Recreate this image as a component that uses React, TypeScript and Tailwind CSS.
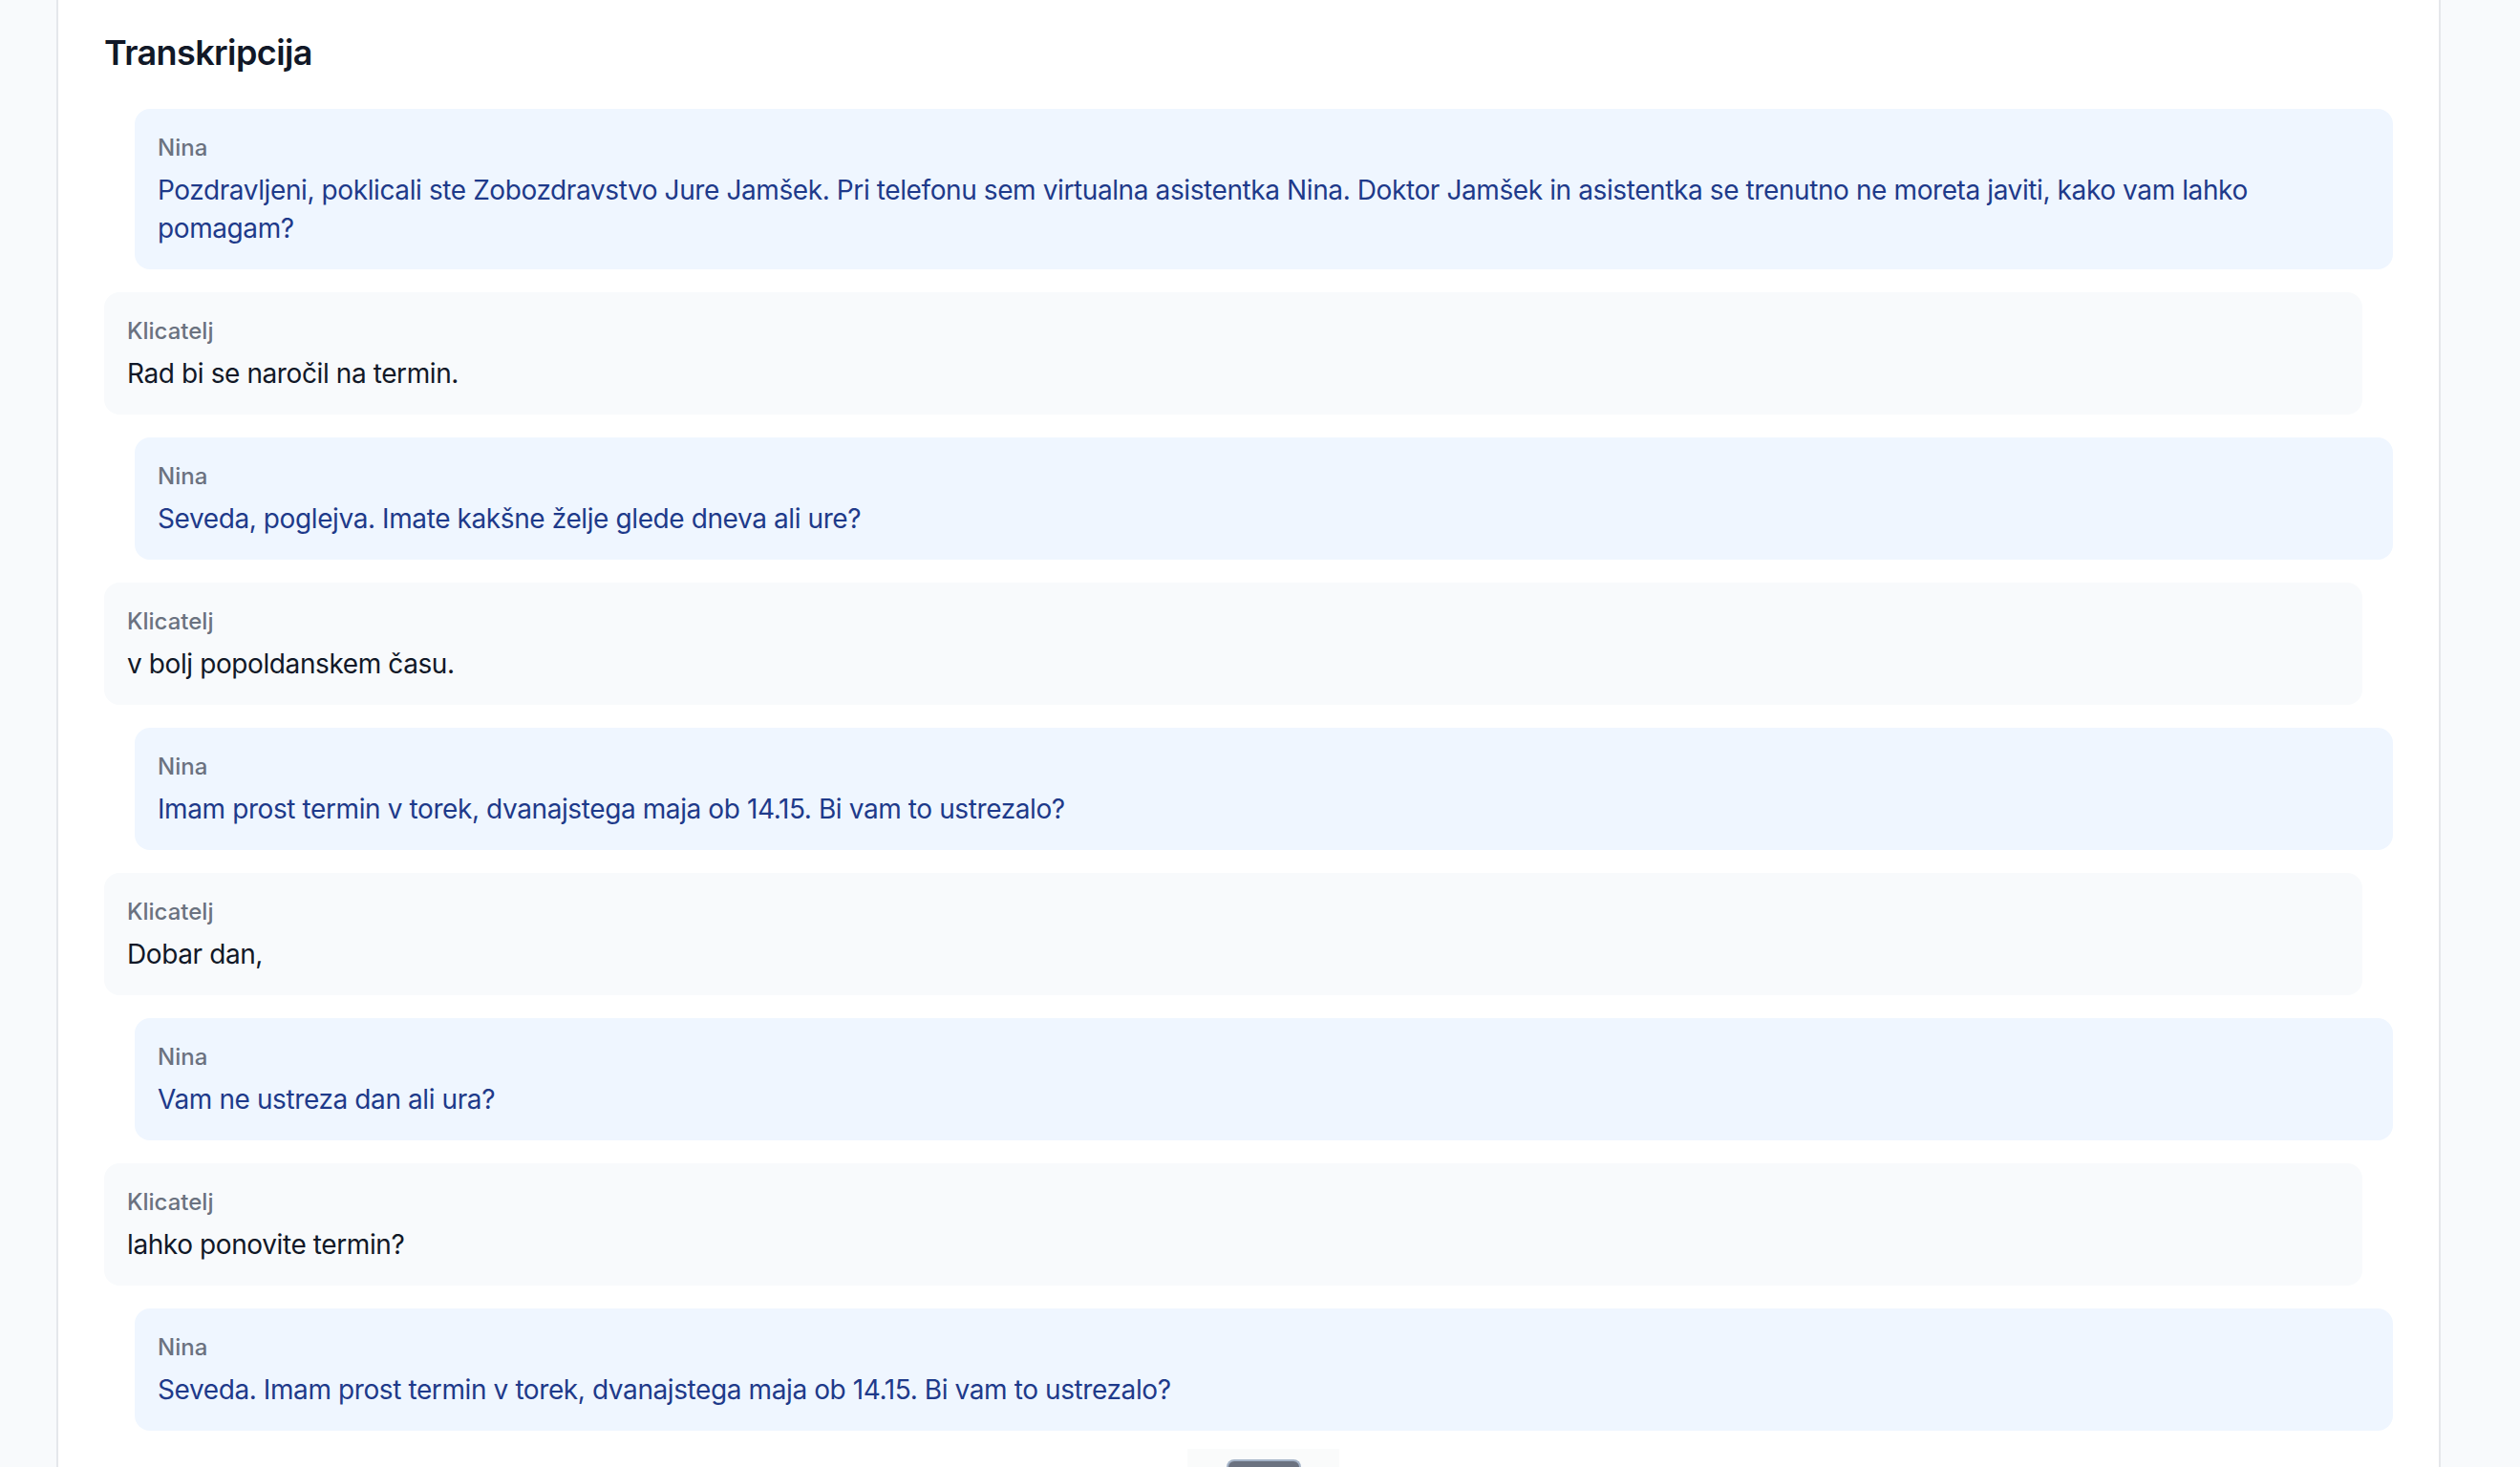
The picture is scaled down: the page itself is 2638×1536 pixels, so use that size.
import React from 'react';

type Line = { speaker: 'Nina' | 'Klicatelj'; text: string };

const transcript: Line[] = [
  {
    speaker: 'Nina',
    text: 'Pozdravljeni, poklicali ste Zobozdravstvo Jure Jamšek. Pri telefonu sem virtualna asistentka Nina. Doktor Jamšek in asistentka se trenutno ne moreta javiti, kako vam lahko pomagam?',
  },
  { speaker: 'Klicatelj', text: 'Rad bi se naročil na termin.' },
  { speaker: 'Nina', text: 'Seveda, poglejva. Imate kakšne želje glede dneva ali ure?' },
  { speaker: 'Klicatelj', text: 'v bolj popoldanskem času.' },
  { speaker: 'Nina', text: 'Imam prost termin v torek, dvanajstega maja ob 14.15. Bi vam to ustrezalo?' },
  { speaker: 'Klicatelj', text: 'Dobar dan,' },
  { speaker: 'Nina', text: 'Vam ne ustreza dan ali ura?' },
  { speaker: 'Klicatelj', text: 'lahko ponovite termin?' },
  { speaker: 'Nina', text: 'Seveda. Imam prost termin v torek, dvanajstega maja ob 14.15. Bi vam to ustrezalo?' },
];

const Bubble = ({ line }: { line: Line }) => {
  const isBot = line.speaker === 'Nina';
  return (
    <div
      className={
        isBot
          ? 'ml-[32px] rounded-[16px] bg-[#eff6ff] px-[24px] pt-[25px] pb-[23px]'
          : 'mr-[32px] rounded-[16px] bg-[#f8fafc] px-[24px] pt-[25px] pb-[23px]'
      }
    >
      <div className="mb-[8px] text-[24px] leading-[32px] font-medium text-[#6b7280]">{line.speaker}</div>
      <p
        className={`text-[28px] leading-[40px] tracking-[-0.4px] ${isBot ? 'text-[#1e3a8a]' : 'text-[#111827]'}`}
      >
        {line.text}
      </p>
    </div>
  );
};

export default function App() {
  return (
    <div className="min-h-screen bg-[#f8fafc]" style={{ fontFamily: 'Inter, "Noto Sans", sans-serif' }}>
      <div className="ml-[59px] mr-[83px] min-h-screen border-x-2 border-[#e5e7eb] bg-white px-[48px] pt-[27px] pb-[80px]">
        <h2 className="mb-[31px] text-[36px] leading-[56px] font-semibold tracking-[-0.6px] text-[#111827]">
          Transkripcija
        </h2>
        <div className="flex flex-col gap-[24px]">
          {transcript.map((line, i) => (
            <Bubble key={i} line={line} />
          ))}
        </div>
      </div>

      {/* floating handle at the bottom edge */}
      <div className="fixed bottom-0 left-[1243px] flex h-[19px] w-[159px] justify-center bg-[#f3f4f6]/40 pt-[11px]">
        <div className="h-[12px] w-[78px] rounded-t-[8px] border-2 border-b-0 border-[#a5b4c8] bg-[#6b7280]" />
      </div>
    </div>
  );
}
